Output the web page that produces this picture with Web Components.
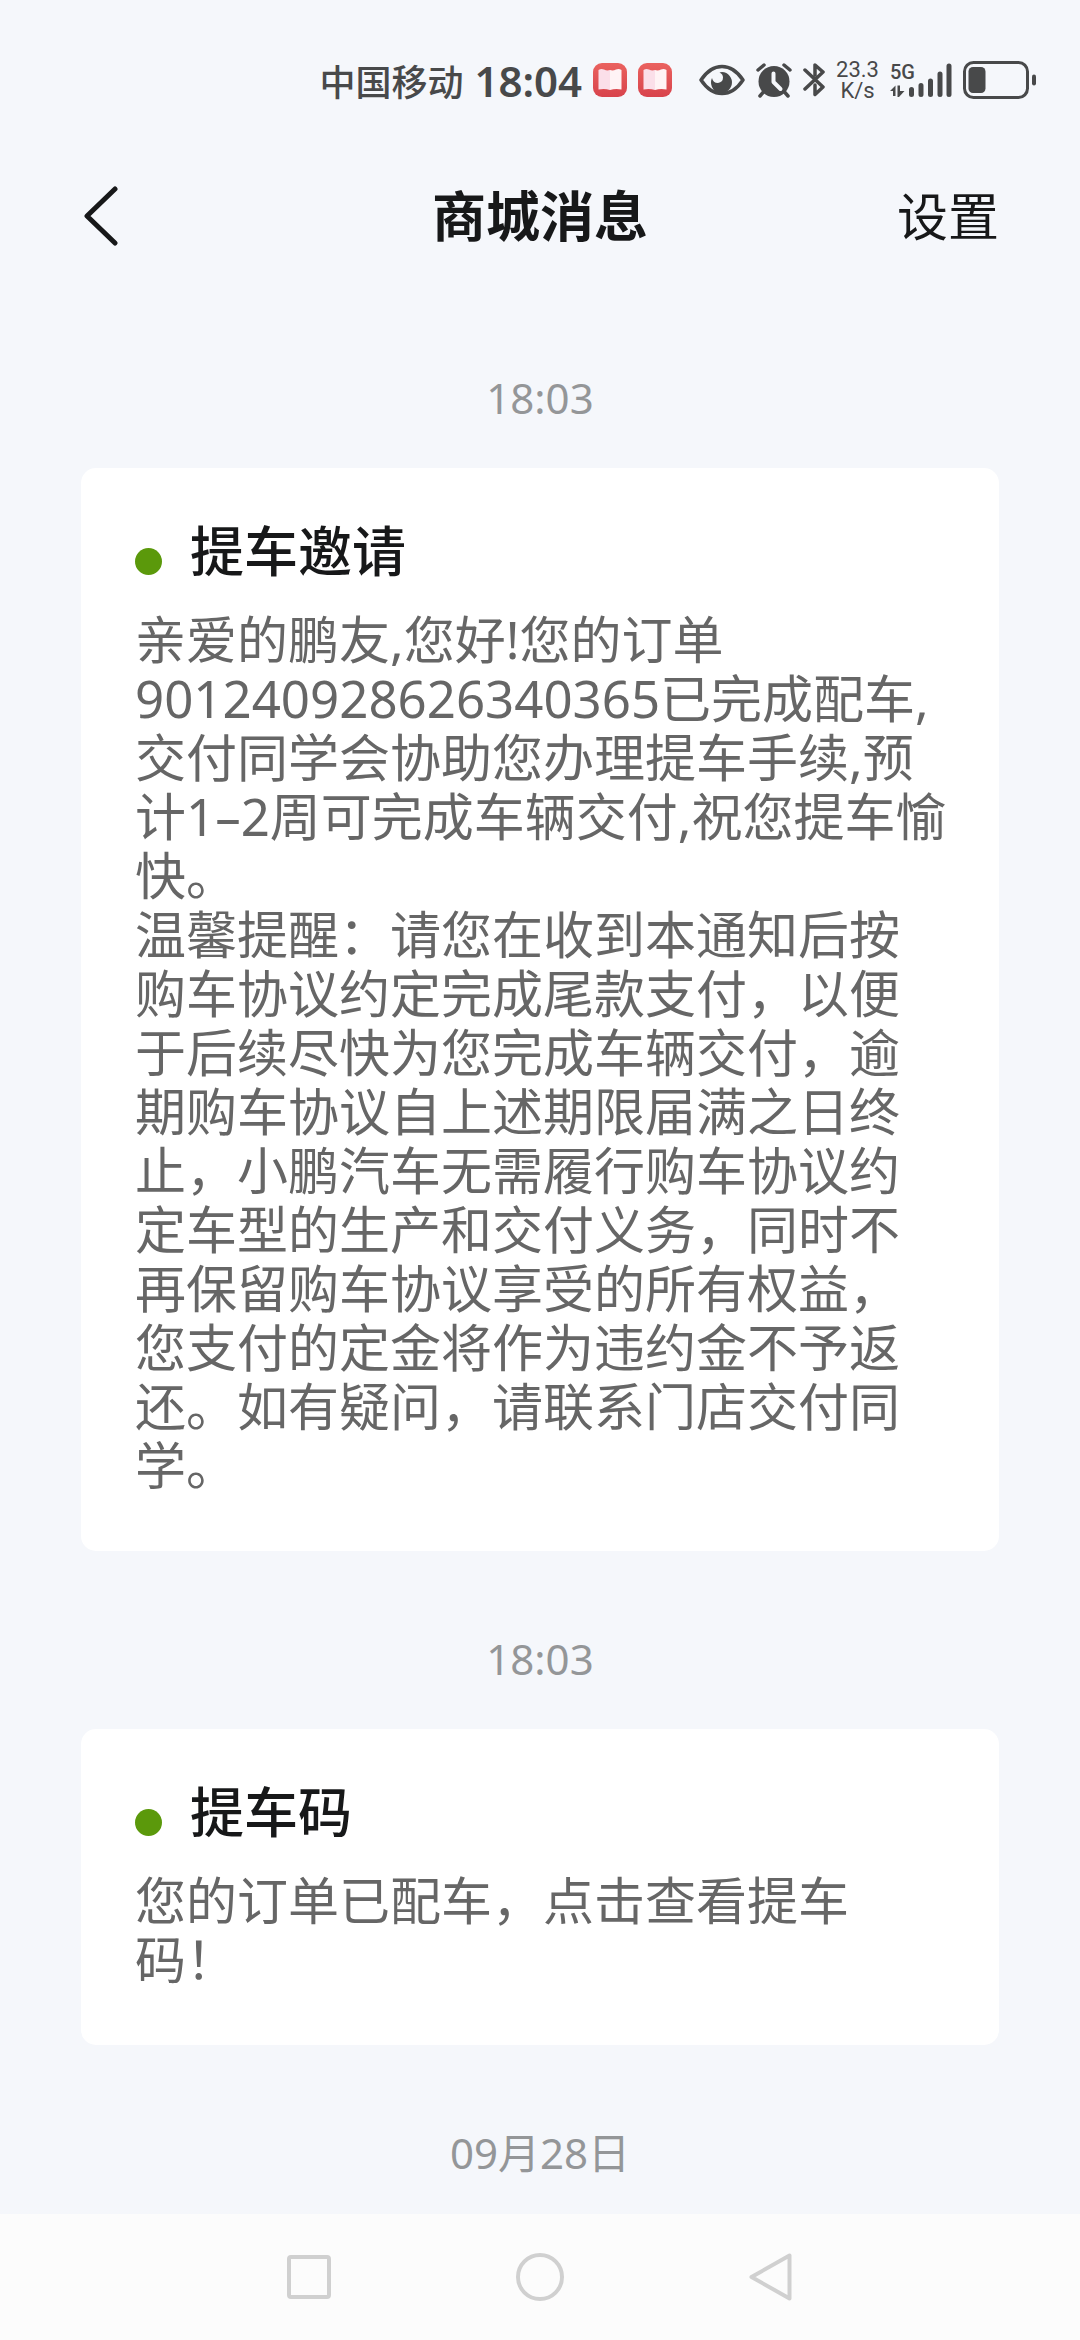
<!DOCTYPE html>
<html lang="zh-CN">
<head>
<meta charset="utf-8">
<meta name="viewport" content="width=device-width, initial-scale=1">
<title>商城消息</title>
<style>
  html, body { margin: 0; }
  body {
    background: #f5f7fb;
    color: #171819;
    font-family: "Noto Sans", "Noto Sans CJK SC", sans-serif;
    text-spacing-trim: space-all;
  }
</style>
</head>
<body>
<mall-app>
  <status-bar slot="top" carrier="中国移动" time="18:04"></status-bar>
  <title-bar slot="top">
    商城消息
    <span slot="action">设置</span>
  </title-bar>
  <time-label>18:03</time-label>
  <message-card>
    <span slot="title">提车邀请</span>
    亲爱的鹏友,您好!您的订单901240928626340365已完成配车,交付同学会协助您办理提车手续,预计1–2周可完成车辆交付,祝您提车愉快。<br>温馨提醒：请您在收到本通知后按购车协议约定完成尾款支付，以便于后续尽快为您完成车辆交付，逾期购车协议自上述期限届满之日终止，小鹏汽车无需履行购车协议约定车型的生产和交付义务，同时不再保留购车协议享受的所有权益，您支付的定金将作为违约金不予返还。如有疑问，请联系门店交付同学。
  </message-card>
  <time-label>18:03</time-label>
  <message-card>
    <span slot="title">提车码</span>
    您的订单已配车，点击查看提车码！
  </message-card>
  <time-label>09月28日</time-label>
  <nav-bar slot="bottom"></nav-bar>
</mall-app>

<script>
  const define = (name, html, setup) => {
    const template = document.createElement('template');
    template.innerHTML = html;
    customElements.define(name, class extends HTMLElement {
      constructor() {
        super();
        this.attachShadow({ mode: 'open' }).append(template.content.cloneNode(true));
      }
      connectedCallback() { if (setup) setup(this); }
    });
  };

  define('mall-app', `
    <style>
      :host { display: flex; flex-direction: column; min-height: 100vh; }
      main { flex: 1; padding: 18px 81px; }
    </style>
    <slot name="top"></slot>
    <main><slot></slot></main>
    <slot name="bottom"></slot>`);

  define('book-icon', `
    <style>:host { display: block; width: 34px; height: 34px; } svg { display: block; }</style>
    <svg width="34" height="34" viewBox="0 0 34 34">
      <defs><linearGradient id="g" x1="0" y1="0" x2="0" y2="1"><stop offset="0" stop-color="#ea625f"/><stop offset="1" stop-color="#d8434c"/></linearGradient></defs>
      <rect width="34" height="34" rx="9" fill="url(#g)"/>
      <path d="M5.500 7Q8 5.500 11 6.500Q14 8 17 7V27Q12 25.500 5.500 26.500Z" fill="#fbdfe9"/>
      <path d="M28.500 7Q26 5.500 23 6.500Q20 8 17 7V27Q22 25.500 28.500 26.500Z" fill="#fff3f5"/>
    </svg>`);

  define('status-bar', `
    <style>
      :host { display: flex; align-items: center; justify-content: flex-end; gap: 11px; height: 160px; padding-right: 44px; box-sizing: border-box; color: #48494a; }
      svg { display: block; flex: none; }
      .carrier { font-size: 36px; font-weight: 500; }
      .time { font-size: 42px; font-weight: 600; }
      .eye { margin-left: 16px; }
      .speed { font: 22px/21px Roboto, sans-serif; text-align: center; }
    </style>
    <span class="carrier"></span>
    <span class="time"></span>
    <book-icon></book-icon>
    <book-icon></book-icon>
    <svg class="eye" width="46" height="34" viewBox="0 0 46 34">
      <path d="M2 17Q11 3.500 23 3.500T44 17Q35 30.500 23 30.500T2 17Z" fill="none" stroke="#48494a" stroke-width="3.500" stroke-linejoin="round"/>
      <path d="M23 9A10.500 10.500 0 1 1 13 15Q14 20 19 20Q24 19 24 14.500Q24 11 20.500 9.500Z" fill="#48494a"/>
    </svg>
    <svg width="36" height="36" viewBox="0 0 36 36">
      <circle cx="18" cy="19.500" r="15.500" fill="#48494a"/>
      <path d="M2 8L8 3M34 8L28 3M7.500 30L4 34M28.500 30L32 34" stroke="#48494a" stroke-width="3.500" stroke-linecap="round"/>
      <path d="M17.500 11.500V20L24.500 27" fill="none" stroke="#f5f7fb" stroke-width="4" stroke-linecap="round" stroke-linejoin="round"/>
    </svg>
    <svg width="22" height="36" viewBox="0 0 22 36">
      <path d="M2 8L20 25L12 32.500V23M2 27L20 10L12 3V13" fill="none" stroke="#48494a" stroke-width="3.500" stroke-linejoin="round" stroke-linecap="round"/>
    </svg>
    <span class="speed">23.3<br>K/s</span>
    <svg width="62" height="44" viewBox="0 -4 62 44" fill="#48494a">
      <text x="0" y="17" font-family="Roboto, sans-serif" font-weight="500" font-size="20">5G</text>
      <path d="M0 29L5.500 23.500V34H3V29ZM7.500 23.500H10V29H14.500L9 35H7.500Z"/>
      <g stroke="#48494a" stroke-width="5" stroke-linecap="round">
        <path d="M21.500 27.500V32.500M31 23.500V32.500M40.500 19V32.500M50 12V32.500M59 4V32.500"/>
      </g>
    </svg>
    <svg width="73" height="38" viewBox="0 0 73 38">
      <rect x="1.500" y="1.500" width="63" height="35" rx="9" fill="none" stroke="#48494a" stroke-width="3"/>
      <rect x="5.500" y="6" width="17" height="26" rx="4.500" fill="#48494a"/>
      <rect x="69" y="13.500" width="4" height="11" rx="2" fill="#48494a"/>
    </svg>`, el => {
      el.shadowRoot.querySelector('.carrier').textContent = el.getAttribute('carrier');
      el.shadowRoot.querySelector('.time').textContent = el.getAttribute('time');
    });

  define('title-bar', `
    <style>
      :host { display: grid; grid-template-columns: 1fr auto 1fr; align-items: center; height: 112px; padding: 0 81px; box-sizing: border-box; }
      h1 { margin: 0; font-size: 54px; font-weight: 700; line-height: 80px; }
      button { border: 0; padding: 0; background: none; color: inherit; font: inherit; line-height: 80px; }
      .back { justify-self: start; }
      .action { justify-self: end; font-size: 51px; }
      svg { display: block; }
    </style>
    <button class="back" aria-label="返回">
      <svg width="38" height="60" viewBox="0 0 38 60"><path d="M34 3L6 30L34 57" fill="none" stroke="#171819" stroke-width="5" stroke-linecap="round" stroke-linejoin="round"/></svg>
    </button>
    <h1><slot></slot></h1>
    <button class="action"><slot name="action"></slot></button>`);

  define('time-label', `
    <style>
      :host { display: block; padding-top: 80px; text-align: center; font-size: 42px; line-height: 56px; color: #949698; }
    </style>
    <slot></slot>`);

  define('message-card', `
    <style>
      :host { display: block; margin-top: 42px; padding: 54px 50px 56px 54px; border-radius: 15px; background: #fff; }
      header { display: flex; align-items: flex-end; gap: 28px; margin-bottom: 29px; }
      header::before { content: ""; width: 27px; height: 27px; margin-bottom: 6px; border-radius: 50%; background: #5b990b; }
      h2 { margin: 0; font-size: 54px; font-weight: 500; line-height: 59px; }
      p { margin: 0; font-size: 51px; line-height: 59px; color: #666; }
    </style>
    <header><h2><slot name="title"></slot></h2></header>
    <p><slot></slot></p>`);

  define('nav-bar', `
    <style>
      :host { display: grid; grid-template-columns: repeat(3, 231px); justify-content: center; height: 126px; background: #fcfcfc; }
      button { display: grid; place-items: center; border: 0; padding: 0; background: none; }
      svg { fill: none; stroke: #d0d0d0; stroke-width: 4; stroke-linejoin: round; }
    </style>
    <button aria-label="最近任务"><svg width="48" height="48"><rect x="4" y="4" width="40" height="40" rx="2"/></svg></button>
    <button aria-label="主屏幕"><svg width="48" height="48"><circle cx="24" cy="24" r="22"/></svg></button>
    <button aria-label="返回"><svg width="48" height="48"><path d="M42.500 2.500V45.500L4.500 24Z"/></svg></button>`);
</script>
</body>
</html>
